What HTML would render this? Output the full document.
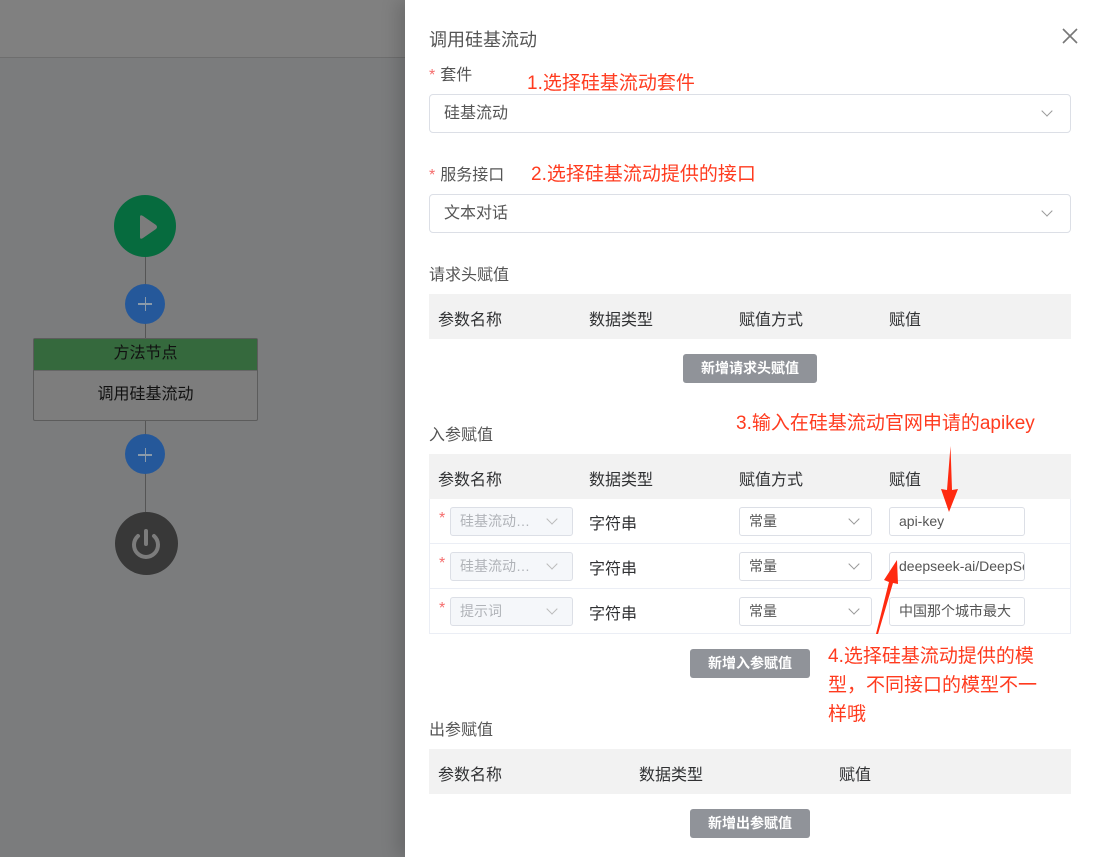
<!DOCTYPE html>
<html><head><meta charset="utf-8"><style>
*{margin:0;padding:0;box-sizing:border-box}
body{width:1099px;height:857px;overflow:hidden;position:relative;background:#7b7c7d;font-family:"Liberation Sans","Noto Sans CJK SC",sans-serif;font-size:16px;color:#303133}
.a{position:absolute}
.panel{position:absolute;left:405px;top:0;width:694px;height:857px;background:#fff;box-shadow:-8px 0 16px rgba(0,0,0,.15)}
.lbl{position:absolute;font-size:16px;color:#555}
.lbl b{color:#f56c6c;font-weight:normal;font-size:16px;margin-right:5px}
.inp{position:absolute;left:429px;width:642px;height:39px;border:1px solid #dcdfe6;border-radius:4px;padding-left:14px;line-height:37px;color:#555;font-size:16px}
.chev{position:absolute;width:8px;height:8px;border-right:1px solid #999;border-bottom:1px solid #999;transform:rotate(45deg)}
.th{position:absolute;left:429px;width:642px;height:45px;background:#f2f2f2;font-size:16px;color:#303133}
.th span{position:absolute;top:12px}
.btn{position:absolute;background:#909399;color:#fff;font-size:14px;font-weight:bold;border-radius:3px;text-align:center;line-height:29px;height:29px}
.row{position:absolute;left:429px;width:642px;height:45px;border:1px solid #ebeef5;border-top:none}
.red{position:absolute;color:#ff3b1f;font-size:19px}
.sel{position:absolute;height:29px;border:1px solid #dcdfe6;border-radius:3px;font-size:14px;line-height:27px;padding-left:9px;color:#555}
.dis{background:#f5f7fa;color:#b0b3b8}
.st{position:absolute;left:439px;color:#f56c6c;font-size:16px}
</style></head><body>
<div class="a" style="left:0;top:0;width:405px;height:58px;background:#808080;border-bottom:1px solid #6e6e6e"></div>
<div class="a" style="left:145px;top:250px;width:1px;height:270px;background:#555"></div>
<div class="a" style="left:114px;top:195px;width:62px;height:62px;border-radius:50%;background:#066b3e"></div>
<svg class="a" style="left:135px;top:212px" width="26" height="30"><path d="M5 5 L5 25 Q5 28 8 26 L21 17 Q23 15 21 13 L8 4 Q5 2 5 5Z" fill="#7c7c7c"/></svg>
<div class="a" style="left:125px;top:284px;width:40px;height:40px;border-radius:50%;background:#25589a"></div>
<div class="a" style="left:138px;top:303px;width:14px;height:1.5px;background:#8a9aaa"></div><div class="a" style="left:144.5px;top:297px;width:1.5px;height:14px;background:#8a9aaa"></div>
<div class="a" style="left:33px;top:338px;width:225px;height:83px;border:1px solid #5c5c5c;border-radius:2px;background:#7d7d7d"></div>
<div class="a" style="left:34px;top:339px;width:223px;height:31px;background:#35693d;text-align:center;line-height:30px;color:#111">方法节点</div>
<div class="a" style="left:34px;top:370px;width:223px;height:50px;text-align:center;line-height:48px;color:#111;border-top:1px solid #666">调用硅基流动</div>
<div class="a" style="left:125px;top:434px;width:40px;height:40px;border-radius:50%;background:#25589a"></div>
<div class="a" style="left:138px;top:454px;width:14px;height:1.5px;background:#8a9aaa"></div><div class="a" style="left:144.5px;top:448px;width:1.5px;height:14px;background:#8a9aaa"></div>
<div class="a" style="left:115px;top:512px;width:63px;height:63px;border-radius:50%;background:#383838"></div>
<svg class="a" style="left:126px;top:523px" width="40" height="40"><path d="M12 13 A12 12 0 1 0 28 13" fill="none" stroke="#7c7c7c" stroke-width="4" stroke-linecap="round"/><line x1="20" y1="8" x2="20" y2="21" stroke="#7c7c7c" stroke-width="4" stroke-linecap="round"/></svg>

<div class="panel"></div>
<div class="a" style="left:429px;top:26px;font-size:18px;color:#555">调用硅基流动</div>
<svg class="a" style="left:1061px;top:27px" width="18" height="18"><path d="M2 2L16 16M16 2L2 16" stroke="#777" stroke-width="1.6"/></svg>

<div class="lbl" style="left:429px;top:61px"><b>*</b>套件</div>
<div class="red" style="left:527px;top:68px">1.选择硅基流动套件</div>
<div class="inp" style="top:94px">硅基流动</div><div class="chev" style="left:1043px;top:107px"></div>
<div class="lbl" style="left:429px;top:161px"><b>*</b>服务接口</div>
<div class="red" style="left:531px;top:159px">2.选择硅基流动提供的接口</div>
<div class="inp" style="top:194px">文本对话</div><div class="chev" style="left:1043px;top:207px"></div>

<div class="lbl" style="left:429px;top:261px">请求头赋值</div>
<div class="th" style="top:294px"><span style="left:9px">参数名称</span><span style="left:160px">数据类型</span><span style="left:310px">赋值方式</span><span style="left:460px">赋值</span></div>
<div class="btn" style="left:683px;top:354px;width:134px">新增请求头赋值</div>

<div class="red" style="left:736px;top:408px">3.输入在硅基流动官网申请的apikey</div>
<div class="lbl" style="left:429px;top:421px">入参赋值</div>
<div class="th" style="top:454px"><span style="left:9px">参数名称</span><span style="left:160px">数据类型</span><span style="left:310px">赋值方式</span><span style="left:460px">赋值</span></div>

<div class="row" style="top:499px"></div><div class="row" style="top:544px"></div><div class="row" style="top:589px"></div>

<div class="st" style="top:510px">*</div>
<div class="sel dis" style="left:450px;top:507px;width:123px">硅基流动…</div><div class="chev" style="left:548px;top:515px;border-color:#bbb"></div>
<div class="a" style="left:589px;top:510px">字符串</div>
<div class="sel" style="left:739px;top:507px;width:133px">常量</div><div class="chev" style="left:850px;top:515px"></div>
<div class="sel" style="left:889px;top:507px;width:136px">api-key</div>

<div class="st" style="top:555px">*</div>
<div class="sel dis" style="left:450px;top:552px;width:123px">硅基流动…</div><div class="chev" style="left:548px;top:560px;border-color:#bbb"></div>
<div class="a" style="left:589px;top:555px">字符串</div>
<div class="sel" style="left:739px;top:552px;width:133px">常量</div><div class="chev" style="left:850px;top:560px"></div>
<div class="sel" style="left:889px;top:552px;width:136px;overflow:hidden;white-space:nowrap">deepseek-ai/DeepSeek</div>

<div class="st" style="top:600px">*</div>
<div class="sel dis" style="left:450px;top:597px;width:123px">提示词</div><div class="chev" style="left:548px;top:605px;border-color:#bbb"></div>
<div class="a" style="left:589px;top:600px">字符串</div>
<div class="sel" style="left:739px;top:597px;width:133px">常量</div><div class="chev" style="left:850px;top:605px"></div>
<div class="sel" style="left:889px;top:597px;width:136px;overflow:hidden;white-space:nowrap">中国那个城市最大</div>

<div class="btn" style="left:690px;top:649px;width:120px">新增入参赋值</div>
<div class="red" style="left:828px;top:642px;line-height:29px;width:222px">4.选择硅基流动提供的模型，不同接口的模型不一样哦</div>

<div class="lbl" style="left:429px;top:716px">出参赋值</div>
<div class="th" style="top:749px"><span style="left:9px">参数名称</span><span style="left:210px">数据类型</span><span style="left:410px">赋值</span></div>
<div class="btn" style="left:690px;top:809px;width:120px">新增出参赋值</div>

<svg class="a" style="left:0;top:0" width="1099" height="857">
<path d="M950.5 446 L952 490 L958 489 L949 512 L941 489 L947 490 Z" fill="#ff2a10"/>
<path d="M876 634 L889 582 L884 580 L897 560 L898 584 L893 583 L878 634 Z" fill="#ff2a10"/>
</svg>
</body></html>
